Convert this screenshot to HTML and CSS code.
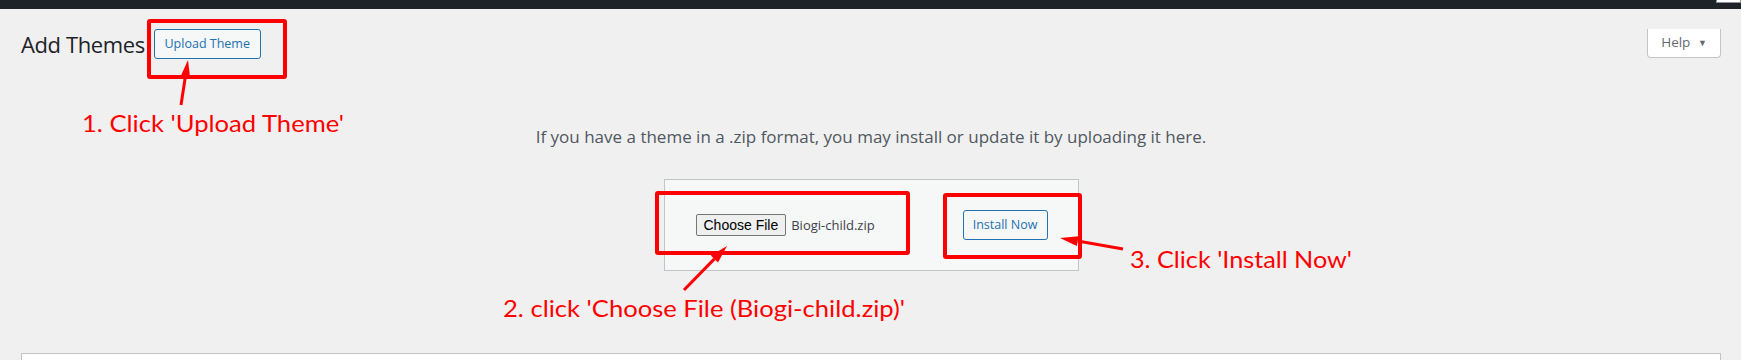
FILE: index.html
```html
<!DOCTYPE html>
<html lang="en">
<head>
    <meta charset="UTF-8">
    <meta name="viewport" content="width=device-width, initial-scale=1.0">
    <title>Add Themes</title>
    <link rel="stylesheet" href="styles.css">
</head>
<body>
    <div class="adminbar"><span class="adminbar-box"></span></div>

    <div class="wrap">
        <div class="help-tab">Help <span class="caret">&#9660;</span></div>

        <div class="title-row">
            <h1>Add Themes</h1>
            <a class="button upload-btn" href="#">Upload Theme</a>
        </div>

        <p class="install-help">If you have a theme in a .zip format, you may install or update it by uploading it here.</p>

        <div class="upload-wrap">
            <form class="upload-form">
                <div class="file-field">
                    <span class="file-btn">Choose File</span>
                    <span class="file-name">Biogi-child.zip</span>
                </div>
                <button class="button install-btn" type="button">Install Now</button>
            </form>
        </div>

        <div class="themes-box"></div>
    </div>

    <!-- annotations drawn over the screenshot -->
    <svg class="notes" width="1741" height="360" viewBox="0 0 1741 360">
        <rect class="note-box" x="149" y="21" width="136" height="56" rx="1"/>
        <rect class="note-box" x="657" y="193" width="251" height="60" rx="1"/>
        <rect class="note-box" x="945" y="195" width="135" height="62" rx="1"/>

        <line class="note-line" x1="181" y1="105" x2="185.2" y2="77.8"/>
        <polygon class="note-head" points="188,60 190.2,78.6 180.3,77"/>

        <line class="note-line" x1="684" y1="290" x2="714.4" y2="258.9"/>
        <polygon class="note-head" points="727,246 718,262.4 710.8,255.4"/>

        <line class="note-line" x1="1123" y1="249" x2="1077.7" y2="241.1"/>
        <polygon class="note-head" points="1060,238 1078.6,236.2 1076.8,246"/>

        <text class="note-text" x="82" y="132" textLength="262" lengthAdjust="spacingAndGlyphs">1. Click 'Upload Theme'</text>
        <text class="note-text" x="503" y="317" textLength="402" lengthAdjust="spacingAndGlyphs">2. click 'Choose File (Biogi-child.zip)'</text>
        <text class="note-text" x="1130" y="268" textLength="222" lengthAdjust="spacingAndGlyphs">3. Click 'Install Now'</text>
    </svg>
</body>
</html>
```

FILE: styles.css
```css
*{
    box-sizing: border-box;
}
body{
    margin: 0;
    background-color: #f0f0f1;
    font-family: "Open Sans", "Noto Sans", sans-serif;
    color: #3c434a;
    overflow: hidden;
    position: relative;
}
.adminbar{
    height: 9px;
    background-color: #1d2327;
    display: flex;
    justify-content: flex-end;
    align-items: flex-start;
}
.adminbar-box{
    width: 25px;
    height: 3px;
    background-color: #fff;
    border: 1px solid #8c8f94;
    border-top: none;
}
.wrap{
    padding: 0 20px 0 21px;
}
.help-tab{
    float: right;
    width: 74px;
    height: 29px;
    background-color: #fff;
    border: 1px solid #c3c4c7;
    border-top: none;
    border-radius: 0 0 4px 4px;
    font-size: 13.5px;
    line-height: 27px;
    color: #646970;
    text-align: center;
}
.caret{
    font-size: 9px;
    margin-left: 4px;
    vertical-align: 1px;
}
.title-row{
    display: flex;
    align-items: center;
    margin-top: 20px;
}
.title-row h1{
    margin: 0 9px 0 0;
    font-size: 22px;
    font-weight: 400;
    letter-spacing: -0.4px;
    line-height: 30px;
    color: #1d2327;
}
.button{
    display: inline-block;
    height: 30px;
    padding: 0 10px;
    border: 1px solid #2271b1;
    border-radius: 3px;
    background-color: #f6f7f7;
    color: #2271b1;
    font-family: "Open Sans", "Noto Sans", sans-serif;
    font-size: 12.5px;
    line-height: 28px;
    text-decoration: none;
}
.upload-btn{
    width: 107px;
    text-align: center;
    padding: 0;
}
.install-help{
    margin: 66px 0 30px;
    font-size: 17px;
    line-height: 24px;
    color: #50575e;
    text-align: center;
}
.upload-wrap{
    display: flex;
    justify-content: center;
}
.upload-form{
    width: 415px;
    display: flex;
    justify-content: space-between;
    align-items: center;
    padding: 30px;
    background-color: #f6f7f7;
    border: 1px solid #c3c4c7;
}
.file-field{
    display: flex;
    align-items: center;
    margin-left: 1px;
}
.file-btn{
    height: 22px;
    padding: 0 7px;
    border: 1px solid #767676;
    border-radius: 2px;
    background-color: #efefef;
    font-family: "Liberation Sans", Arial, sans-serif;
    font-size: 14px;
    line-height: 20px;
    color: #000;
}
.file-name{
    margin-left: 5px;
    font-size: 13px;
    color: #3c434a;
}
.install-btn{
    width: 85px;
    padding: 0;
    text-align: center;
}
.themes-box{
    margin-top: 82px;
    height: 200px;
    background-color: #fff;
    border: 1px solid #c3c4c7;
}
.notes{
    position: absolute;
    top: 0;
    left: 0;
    pointer-events: none;
}
.note-box{
    fill: none;
    stroke: #ff0000;
    stroke-width: 4;
}
.note-line{
    stroke: #ff0000;
    stroke-width: 3;
}
.note-head{
    fill: #ff0000;
}
.note-text{
    fill: #ff0000;
    font-family: Lato, "Open Sans", sans-serif;
    font-size: 24px;
}
```
